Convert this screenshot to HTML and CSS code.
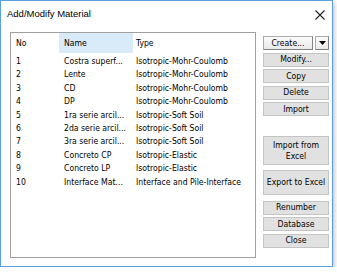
FILE: index.html
```html
<!DOCTYPE html>
<html lang="en">
<head>
  <meta charset="UTF-8">
  <meta name="viewport" content="width=device-width, initial-scale=1.0">
  <title>Add/Modify Material</title>
  <link rel="stylesheet" href="styles.css">
</head>
<body>
  <div class="window">
    <div class="title-bar">
      <span class="title">Add/Modify Material</span>
      <svg class="close-x" width="10" height="10" viewBox="0 0 10 10">
        <path d="M0.5 0.5 L9.5 9.5 M9.5 0.5 L0.5 9.5" stroke="#222" stroke-width="1.1"/>
      </svg>
    </div>
    <div class="dialog-body">
      <div class="list-box">
        <div class="list-head">
          <div class="cell col-no">No</div>
          <div class="cell col-name sorted">Name</div>
          <div class="cell col-type">Type</div>
        </div>
        <div class="list-rows">
          <div class="row"><div class="cell col-no">1</div><div class="cell col-name">Costra superf...</div><div class="cell col-type">Isotropic-Mohr-Coulomb</div></div>
          <div class="row"><div class="cell col-no">2</div><div class="cell col-name">Lente</div><div class="cell col-type">Isotropic-Mohr-Coulomb</div></div>
          <div class="row"><div class="cell col-no">3</div><div class="cell col-name">CD</div><div class="cell col-type">Isotropic-Mohr-Coulomb</div></div>
          <div class="row"><div class="cell col-no">4</div><div class="cell col-name">DP</div><div class="cell col-type">Isotropic-Mohr-Coulomb</div></div>
          <div class="row"><div class="cell col-no">5</div><div class="cell col-name">1ra serie arcil...</div><div class="cell col-type">Isotropic-Soft Soil</div></div>
          <div class="row"><div class="cell col-no">6</div><div class="cell col-name">2da serie arcil...</div><div class="cell col-type">Isotropic-Soft Soil</div></div>
          <div class="row"><div class="cell col-no">7</div><div class="cell col-name">3ra serie arcil...</div><div class="cell col-type">Isotropic-Soft Soil</div></div>
          <div class="row"><div class="cell col-no">8</div><div class="cell col-name">Concreto CP</div><div class="cell col-type">Isotropic-Elastic</div></div>
          <div class="row"><div class="cell col-no">9</div><div class="cell col-name">Concreto LP</div><div class="cell col-type">Isotropic-Elastic</div></div>
          <div class="row"><div class="cell col-no">10</div><div class="cell col-name">Interface Mat...</div><div class="cell col-type">Interface and Pile-Interface</div></div>
        </div>
      </div>
      <div class="btn-column">
        <div class="split-btn">
          <button class="btn btn-light btn-main">Create...</button>
          <button class="btn btn-light btn-drop">
            <svg width="7" height="4" viewBox="0 0 7 4"><path d="M0 0 H7 L3.5 4 Z" fill="#000"/></svg>
          </button>
        </div>
        <button class="btn">Modify...</button>
        <button class="btn">Copy</button>
        <button class="btn">Delete</button>
        <button class="btn">Import</button>
        <button class="btn btn-tall btn-import-xl">Import from<br>Excel</button>
        <button class="btn btn-tall btn-export-xl">Export to Excel</button>
        <button class="btn btn-gap">Renumber</button>
        <button class="btn">Database</button>
        <button class="btn">Close</button>
      </div>
    </div>
  </div>
</body>
</html>
```

FILE: styles.css
```css
body {
  margin: 0px;
  background-color: white;
  font-family: "DejaVu Sans", "Liberation Sans", sans-serif;
  font-stretch: condensed;
  font-size: 8.6px;
  color: black;
}
.window {
  width: 333px;
  height: 267px;
  box-sizing: border-box;
  border: 1px solid rgb(90, 160, 228);
  background-color: white;
  box-shadow: 1px 2px 5px rgba(0, 0, 0, 0.28);
  display: flex;
  flex-direction: column;
}
.title-bar {
  height: 31px;
  display: flex;
  justify-content: space-between;
  align-items: flex-start;
  padding: 6px 6px 0 6px;
  box-sizing: border-box;
}
.title {
  font-family: "Liberation Sans", Arial, sans-serif;
  font-stretch: normal;
  font-size: 9.5px;
  line-height: 14px;
}
.close-x {
  margin-top: 3px;
  margin-right: 1px;
}
.dialog-body {
  flex: 1;
  display: flex;
  gap: 7px;
  padding: 0 3px 8px 9px;
}
.list-box {
  width: 246px;
  box-sizing: border-box;
  border: 1px solid rgb(160, 160, 160);
  background-color: white;
}
.list-head,
.row {
  display: grid;
  grid-template-columns: 48px 74px 1fr;
}
.list-head {
  height: 20px;
  line-height: 20px;
}
.list-rows {
  padding-top: 2px;
}
.row {
  height: 13.4px;
  line-height: 13.4px;
}
.cell {
  white-space: nowrap;
  overflow: hidden;
}
.col-no {
  padding-left: 5px;
}
.col-name {
  padding-left: 5px;
}
.col-type {
  padding-left: 3px;
}
.sorted {
  background-color: rgb(217, 235, 249);
}
.btn-column {
  width: 66px;
  display: flex;
  flex-direction: column;
  gap: 2.5px;
  padding-top: 4px;
}
.btn {
  height: 14px;
  padding: 0;
  margin: 0;
  box-sizing: border-box;
  border: 1px solid rgb(196, 196, 196);
  background-color: rgb(225, 225, 225);
  font-family: "DejaVu Sans", "Liberation Sans", sans-serif;
  font-stretch: condensed;
  font-size: 8.6px;
  color: black;
  line-height: 11px;
}
.split-btn {
  display: flex;
  justify-content: space-between;
}
.btn-light {
  border: 1px solid rgb(172, 172, 172);
  border-right-color: rgb(130, 130, 130);
  border-bottom-color: rgb(130, 130, 130);
  background: linear-gradient(rgb(250, 250, 250), rgb(234, 234, 234));
}
.btn-main {
  width: 50px;
}
.btn-drop {
  width: 14px;
  display: flex;
  align-items: center;
  justify-content: center;
}
.btn-tall {
  line-height: 10.5px;
}
.btn-import-xl {
  height: 29px;
  margin-top: 17.5px;
}
.btn-export-xl {
  height: 25px;
  margin-top: 2.5px;
}
.btn-gap {
  margin-top: 3px;
}
```
